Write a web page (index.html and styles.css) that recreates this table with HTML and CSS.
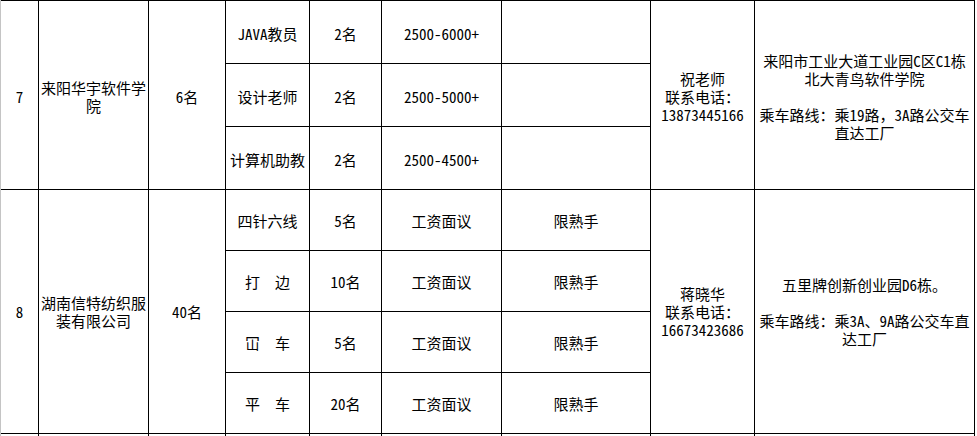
FILE: index.html
```html
<!DOCTYPE html>
<html lang="zh-CN">
<head>
<meta charset="utf-8">
<title>招聘信息</title>
<link rel="stylesheet" href="styles.css">
</head>
<body>
<div class="sheet">
  <div class="grid">
    <div class="cell span3 first">7</div>
    <div class="cell span3 first">来阳华宇软件学院</div>
    <div class="cell span3 first">6名</div>
    <div class="cell first">JAVA教员</div>
    <div class="cell first">2名</div>
    <div class="cell first">2500-6000+</div>
    <div class="cell"></div>
    <div class="cell span3 first">祝老师<br>联系电话：<br>13873445166</div>
    <div class="cell span3 first">来阳市工业大道工业园C区C1栋<br>北大青鸟软件学院<br><br>乘车路线：乘19路，3A路公交车直达工厂</div>
    <div class="cell first">设计老师</div>
    <div class="cell first">2名</div>
    <div class="cell first">2500-5000+</div>
    <div class="cell"></div>
    <div class="cell first">计算机助教</div>
    <div class="cell first">2名</div>
    <div class="cell first">2500-4500+</div>
    <div class="cell"></div>

    <div class="cell span4">8</div>
    <div class="cell span4">湖南信特纺织服装有限公司</div>
    <div class="cell span4">40名</div>
    <div class="cell">四针六线</div>
    <div class="cell">5名</div>
    <div class="cell">工资面议</div>
    <div class="cell">限熟手</div>
    <div class="cell span4">蒋晓华<br>联系电话：<br>16673423686</div>
    <div class="cell span4">五里牌创新创业园D6栋。<br><br>乘车路线：乘3A、9A路公交车直达工厂</div>
    <div class="cell">打　边</div>
    <div class="cell">10名</div>
    <div class="cell">工资面议</div>
    <div class="cell">限熟手</div>
    <div class="cell">冚　车</div>
    <div class="cell">5名</div>
    <div class="cell">工资面议</div>
    <div class="cell">限熟手</div>
    <div class="cell">平　车</div>
    <div class="cell">20名</div>
    <div class="cell">工资面议</div>
    <div class="cell">限熟手</div>

    <div class="cell"></div>
    <div class="cell"></div>
    <div class="cell"></div>
    <div class="cell"></div>
    <div class="cell"></div>
    <div class="cell"></div>
    <div class="cell"></div>
    <div class="cell"></div>
    <div class="cell"></div>
  </div>
</div>
</body>
</html>
```
FILE: styles.css
```css
html, body {
  margin: 0;
  padding: 0;
  background: #ffffff;
}

.sheet {
  position: relative;
  width: 977px;
  height: 436px;
  overflow: hidden;
  border-left: 1px solid #c4c4c4;
  box-sizing: border-box;
  font-family: "Noto Sans Mono CJK SC", "Noto Sans CJK SC", "Liberation Mono", monospace;
  font-size: 15px;
  font-weight: 300;
  line-height: 18px;
  color: #000000;
}

.sheet::before {
  content: "";
  position: absolute;
  left: -1px;
  top: 372px;
  width: 1px;
  height: 61px;
  background: #45b04a;
}

.grid {
  display: grid;
  grid-template-columns: 37px 109px 76px 83px 71px 119px 148px 103px 219px;
  grid-template-rows: 62px 62px 62px 60px 60px 60px 60px 60px;
  gap: 1px;
  background: #000000;
  border-top: 1px solid #000000;
  border-right: 1px solid #000000;
  width: 974px;
  box-sizing: border-box;
}

.cell {
  background: #ffffff;
  display: flex;
  align-items: center;
  justify-content: center;
  text-align: center;
  padding: 1px 2px 0;
  overflow: hidden;
}

.cell.first {
  padding-top: 3px;
}

.span3 {
  grid-row: span 3;
}

.span4 {
  grid-row: span 4;
}
```
